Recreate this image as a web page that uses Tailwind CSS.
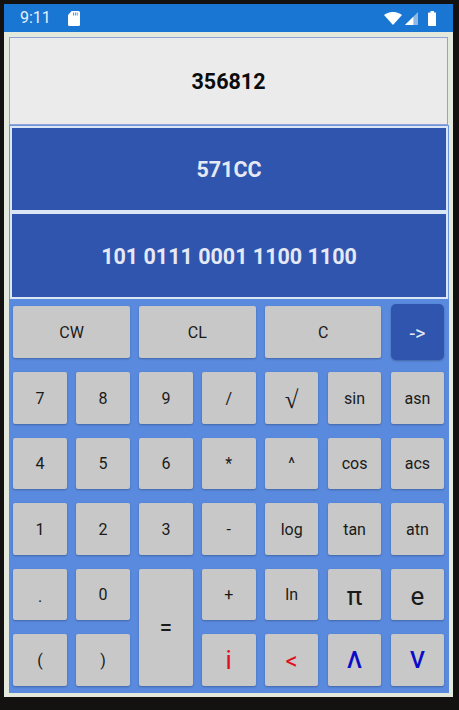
<!DOCTYPE html>
<html>
<head>
<meta charset="utf-8">
<script src="https://cdn.jsdelivr.net/npm/@tailwindcss/browser@4"></script>
</head>
<body class="bg-[#141210] w-[459px] h-[710px] overflow-hidden font-['Roboto',sans-serif]">
<div class="ml-[4px] mt-[4px] w-[449px] h-[692.5px] bg-[#e3e9dc] flex flex-col">
  <div class="h-[28px] bg-[#1976d2] flex items-center pl-[16px] pr-[17px] text-white shrink-0">
    <span class="text-[16px] text-[#e6f0fa] w-[48px]">9:11</span>
    <svg width="12" height="15" viewBox="0 0 13 15" preserveAspectRatio="none"><path d="M4 0H11.5A1.5 1.5 0 0 1 13 1.5V13.5A1.5 1.5 0 0 1 11.5 15H1.5A1.5 1.5 0 0 1 0 13.5V4Z" fill="#fff"/><path d="M6 1.5V4.5M8 1.5V4.5M10 1.5V4.5" stroke="#1976d2" stroke-width="0.8"/></svg>
    <div class="ml-auto flex items-center">
      <svg width="18" height="13" viewBox="0 0 21 15" preserveAspectRatio="none"><path d="M0 3.5C6 -1.2 15 -1.2 21 3.5L10.5 15Z" fill="#fff"/></svg>
      <svg class="ml-[3px]" width="13" height="13" viewBox="0 0 14 14"><path d="M14 0V14H0Z" fill="#8fb8e4"/><path d="M9 5V14H0Z" fill="#fff"/></svg>
      <svg class="ml-[10px]" width="8.5" height="15" viewBox="0 0 10 16" preserveAspectRatio="none"><path d="M3 0H7V1.5H9A1 1 0 0 1 10 2.5V15A1 1 0 0 1 9 16H1A1 1 0 0 1 0 15V2.5A1 1 0 0 1 1 1.5H3Z" fill="#fff"/></svg>
    </div>
  </div>
  <div class="ml-[5px] mt-[5px] w-[440px] flex flex-col">
    <div class="w-[439px] h-[88px] pt-[3px] bg-[#ebebeb] border border-[#8fa3d8] flex items-center justify-center font-bold text-[21.5px] text-[#0c0c0c]">356812</div>
    <div class="bg-[#6f93d8] px-[1px] pt-[1px]">
      <div class="h-[86px] pt-[3px] bg-[#2f55ae] border-2 border-[#dbe6f5] flex items-center justify-center font-bold text-[21.5px] text-[#e4e9f5]">571CC</div>
      <div class="h-[87px] pt-[3px] bg-[#2f55ae] border-2 border-[#dbe6f5] flex items-center justify-center font-bold text-[21.5px] text-[#e4e9f5]">101 0111 0001 1100 1100</div>
    </div>
    <div class="h-[394px] bg-[#5a8ade] pl-[4.3px] pt-[7px]">
      <div class="grid grid-cols-[repeat(7,53.6px)] gap-x-[9.3px] gap-y-[14px] grid-rows-[52px_repeat(5,51.5px)] text-[16px] text-[#1a1a1a] [&>div]:bg-[#c8c8c8] [&>div]:rounded-[2px] [&>div]:flex [&>div]:items-center [&>div]:justify-center [&>div]:pt-[2px] [&>div]:shadow-[0_1px_2px_rgba(40,60,100,0.45)]">
        <div class="col-span-2">CW</div>
        <div class="col-span-2">CL</div>
        <div class="col-span-2">C</div>
        <div class="!bg-[#2f55ae] !rounded-[5px] text-[#e4e9f5] !text-[20px] -my-[2px]">-&gt;</div>

        <div>7</div><div>8</div><div>9</div><div>/</div>
        <div class="text-[25px] font-semibold font-['Noto_Sans']">√</div><div>sin</div><div>asn</div>

        <div>4</div><div>5</div><div>6</div><div>*</div>
        <div>^</div><div>cos</div><div>acs</div>

        <div>1</div><div>2</div><div>3</div><div>-</div>
        <div>log</div><div>tan</div><div>atn</div>

        <div class="!pt-[5px]">.</div><div>0</div>
        <div class="row-span-2 text-[23px] !pt-[5px]">=</div>
        <div>+</div><div>ln</div>
        <div class="text-[26px] !pt-[5px]">π</div><div class="text-[26px] !pt-[5px]">e</div>

        <div>(</div><div>)</div>
        <div class="text-[#e00d1c] text-[26px]">i</div>
        <div class="text-[#e00d1c] text-[24px]">&lt;</div>
        <div class="text-[#0a0ac8] text-[23px] font-medium">Λ</div>
        <div class="text-[#0a0ac8] text-[23px] font-medium">V</div>
      </div>
    </div>
  </div>
</div>
</body>
</html>
